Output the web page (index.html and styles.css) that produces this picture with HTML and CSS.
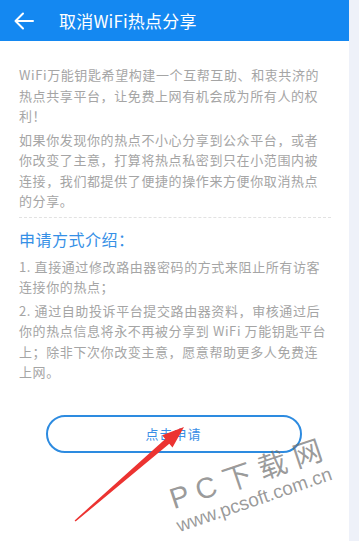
FILE: index.html
```html
<!DOCTYPE html>
<html lang="zh-CN">
<head>
<meta charset="utf-8">
<title>取消WiFi热点分享</title>
<link rel="stylesheet" href="styles.css">
</head>
<body>
<div class="app">
  <div class="screen">
    <header class="bar">
      <svg class="back" width="20" height="18" viewBox="0 0 20 18" aria-hidden="true">
        <path d="M1.5 9 H19 M9 1.5 L1.5 9 L9 16.5" fill="none" stroke="#fff" stroke-width="2" stroke-linecap="round" stroke-linejoin="round"/>
      </svg>
      <h1 class="title">取消WiFi热点分享</h1>
    </header>
    <main class="content">
      <p class="para">WiFi万能钥匙希望构建一个互帮互助、和衷共济的<br>热点共享平台，让免费上网有机会成为所有人的权<br>利！</p>
      <p class="para">如果你发现你的热点不小心分享到公众平台，或者<br>你改变了主意，打算将热点私密到只在小范围内被<br>连接，我们都提供了便捷的操作来方便你取消热点<br>的分享。</p>
      <div class="dash"></div>
      <h2 class="section">申请方式介绍：</h2>
      <p class="para">1. 直接通过修改路由器密码的方式来阻止所有访客<br>连接你的热点；</p>
      <p class="para">2. 通过自助投诉平台提交路由器资料，审核通过后<br>你的热点信息将永不再被分享到 WiFi 万能钥匙平台<br>上；除非下次你改变主意，愿意帮助更多人免费连<br>上网。</p>
      <div class="action">
        <button class="apply" type="button">点击申请</button>
      </div>
    </main>
  </div>
  <div class="strip"></div>
</div>

<svg class="pointer" width="359" height="541" viewBox="0 0 359 541" aria-hidden="true">
  <polygon points="184,427 172.5,447.5 169.3,443.7 75.6,521.6 74.6,520.4 165.3,439.1 162.1,435.3" fill="#ec3331"/>
</svg>
<div class="mark mark-big">P C 下 载 网</div>
<div class="mark mark-url">www.pcsoft.com.cn</div>
</body>
</html>
```

FILE: styles.css
```css
* { box-sizing: border-box; }

html, body {
  margin: 0;
  padding: 0;
  background: #ffffff;
}

body {
  font-family: "Noto Sans CJK SC", "Noto Sans", sans-serif;
  width: 359px;
  height: 541px;
  overflow: hidden;
  position: relative;
}

.app {
  display: flex;
  height: 541px;
}

.screen {
  width: 349px;
  flex: none;
  display: flex;
  flex-direction: column;
  background: #ffffff;
}

.strip {
  flex: 1;
  background: #eef1f9;
}

.bar {
  height: 41px;
  background: #1488f1;
  display: flex;
  align-items: center;
  padding-left: 14px;
  gap: 25px;
}

.back { display: block; }

.title {
  margin: 0;
  font-size: 17px;
  font-weight: 400;
  color: #ffffff;
  letter-spacing: 0.2px;
  line-height: 24px;
}

.content {
  padding: 24px 18px 0 19px;
}

.para {
  margin: 0 0 3px;
  font-size: 13px;
  line-height: 20.5px;
  letter-spacing: 0.6px;
  color: #a5a5a5;
  white-space: nowrap;
}

.dash {
  border-top: 1px dashed #e2e2e2;
  margin: 5px 0 9px;
}

.section {
  margin: 0 0 6px;
  font-size: 16px;
  font-weight: 400;
  line-height: 24px;
  color: #3590e6;
  letter-spacing: 0.5px;
}

.action {
  display: flex;
  justify-content: center;
  padding-top: 29px;
  padding-right: 3px;
}

.apply {
  width: 256px;
  height: 38px;
  border: 2px solid #2d8be0;
  border-radius: 19px;
  background: #ffffff;
  color: #3a8ee6;
  font-family: "Noto Sans CJK SC", "Noto Sans", sans-serif;
  font-size: 13px;
  letter-spacing: 1px;
  padding: 0;
}

.pointer {
  position: absolute;
  left: 0;
  top: 0;
  pointer-events: none;
}

.mark {
  position: absolute;
  color: rgba(110, 110, 110, 0.7);
  white-space: nowrap;
  transform-origin: left bottom;
  pointer-events: none;
}

.mark-big {
  left: 176px;
  top: 482px;
  font-family: "Liberation Sans", "Noto Sans CJK SC", sans-serif;
  font-size: 29px;
  line-height: 34px;
  transform: rotate(-18.5deg);
}

.mark-url {
  left: 181px;
  top: 515px;
  font-family: "Liberation Sans", sans-serif;
  font-size: 19px;
  line-height: 22px;
  transform: rotate(-19deg);
}
```
